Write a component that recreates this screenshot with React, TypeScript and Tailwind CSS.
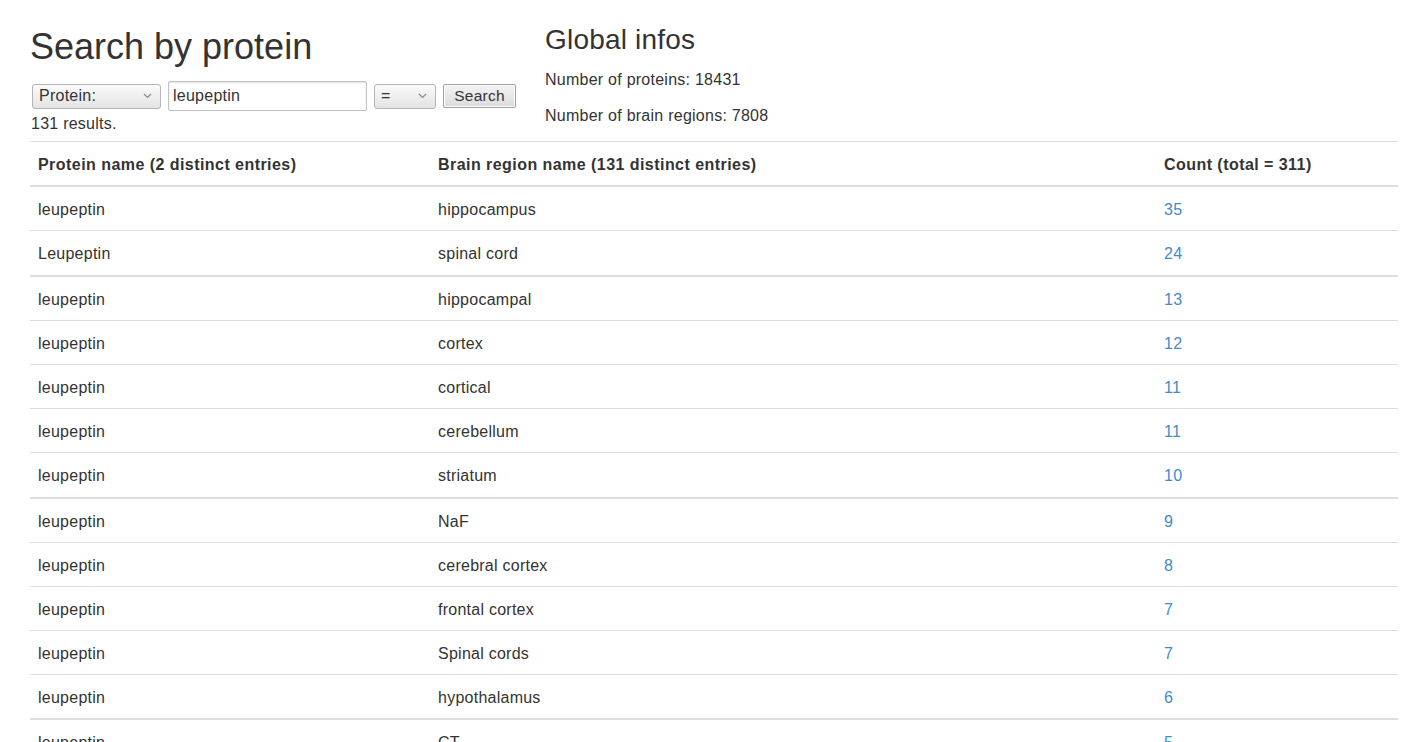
import React from "react";

type Row = { protein: string; region: string; count: number };

// rows come grouped the way the page splits them into tbodies
const groups: Row[][] = [
  [
    { protein: "leupeptin", region: "hippocampus", count: 35 },
    { protein: "Leupeptin", region: "spinal cord", count: 24 },
  ],
  [
    { protein: "leupeptin", region: "hippocampal", count: 13 },
    { protein: "leupeptin", region: "cortex", count: 12 },
    { protein: "leupeptin", region: "cortical", count: 11 },
    { protein: "leupeptin", region: "cerebellum", count: 11 },
    { protein: "leupeptin", region: "striatum", count: 10 },
  ],
  [
    { protein: "leupeptin", region: "NaF", count: 9 },
    { protein: "leupeptin", region: "cerebral cortex", count: 8 },
    { protein: "leupeptin", region: "frontal cortex", count: 7 },
    { protein: "leupeptin", region: "Spinal cords", count: 7 },
    { protein: "leupeptin", region: "hypothalamus", count: 6 },
  ],
  [{ protein: "leupeptin", region: "CT", count: 5 }],
];

const Chevron = () => (
  <svg width="9" height="6" viewBox="0 0 9 6" fill="none">
    <path d="M1 1l3.5 3.5L8 1" stroke="#8a8a8a" strokeWidth="1.2" />
  </svg>
);

const FakeSelect: React.FC<{ label: string; width: string }> = ({ label, width }) => (
  <div
    className={`${width} h-[25px] flex items-center justify-between pl-[6px] pr-[8px] border border-[#b5b5b5] rounded-[3px] bg-[linear-gradient(#fbfbfb,#e3e3e3)] text-[16px] text-[#333]`}
  >
    <span>{label}</span>
    <Chevron />
  </div>
);

export default function App() {
  return (
    <div className="min-h-screen bg-white text-[#333] text-[16px] leading-[1.2] tracking-[0.25px] font-['Liberation_Sans',Arial,Helvetica,sans-serif]">
      <div className="ml-[30px] w-[1368px]">
        <div className="flex">
          <div className="w-[515px] pt-[27px]">
            <h1 className="text-[36px] leading-[40px] font-normal tracking-normal">Search by protein</h1>
            <div className="mt-[14px] ml-[2px] h-[30px] flex items-center gap-[7px]">
              <FakeSelect label="Protein:" width="w-[129px]" />
              <div className="w-[199px] h-[30px] flex items-center pl-[4px] border border-[#c2c2c2] rounded-[2px] shadow-[inset_0_1px_2px_rgba(0,0,0,0.12)] bg-white">
                leupeptin
              </div>
              <FakeSelect label="=" width="w-[62px]" />
              <button className="w-[73px] h-[24px] flex items-center justify-center border border-[#a3a3a3] rounded-[2px] bg-[linear-gradient(#f4f4f4,#dcdcdc)] shadow-[inset_0_0_0_1px_#fbfbfb] text-[15.5px] text-[#333]">
                Search
              </button>
            </div>
            <div className="mt-[3px] ml-[1px] leading-[20px]">131 results.</div>
          </div>
          <div className="pt-[24px]">
            <h2 className="text-[28px] leading-[32px] font-normal tracking-[0.2px]">Global infos</h2>
            <p className="mt-[14px] leading-[20px]">Number of proteins: 18431</p>
            <p className="mt-[16px] leading-[20px]">Number of brain regions: 7808</p>
          </div>
        </div>

        <table className="mt-[7px] w-full table-fixed border-separate border-spacing-0">
          <colgroup>
            <col className="w-[400px]" />
            <col className="w-[726px]" />
            <col />
          </colgroup>
          <thead>
            <tr>
              <th className="text-left font-bold tracking-[0.45px] px-[8px] pt-[12.5px] pb-[11.5px] border-t border-b-2 border-[#ddd]">
                Protein name (2 distinct entries)
              </th>
              <th className="text-left font-bold tracking-[0.45px] px-[8px] pt-[12.5px] pb-[11.5px] border-t border-b-2 border-[#ddd]">
                Brain region name (131 distinct entries)
              </th>
              <th className="text-left font-bold tracking-[0.45px] px-[8px] pt-[12.5px] pb-[11.5px] border-t border-b-2 border-[#ddd]">
                Count (total = 311)
              </th>
            </tr>
          </thead>
          {groups.map((group, g) => (
            <tbody key={g}>
              {group.map((row, i) => {
                const edge =
                  i === 0 ? (g === 0 ? "" : "border-t-2 border-[#ddd]") : "border-t border-[#ddd]";
                return (
                  <tr key={i}>
                    <td className={`px-[8px] pt-[13px] pb-[11px] ${edge}`}>{row.protein}</td>
                    <td className={`px-[8px] pt-[13px] pb-[11px] ${edge}`}>{row.region}</td>
                    <td className={`px-[8px] pt-[13px] pb-[11px] ${edge}`}>
                      <a href="#" className="text-[#428bca]">
                        {row.count}
                      </a>
                    </td>
                  </tr>
                );
              })}
            </tbody>
          ))}
        </table>
      </div>
    </div>
  );
}
